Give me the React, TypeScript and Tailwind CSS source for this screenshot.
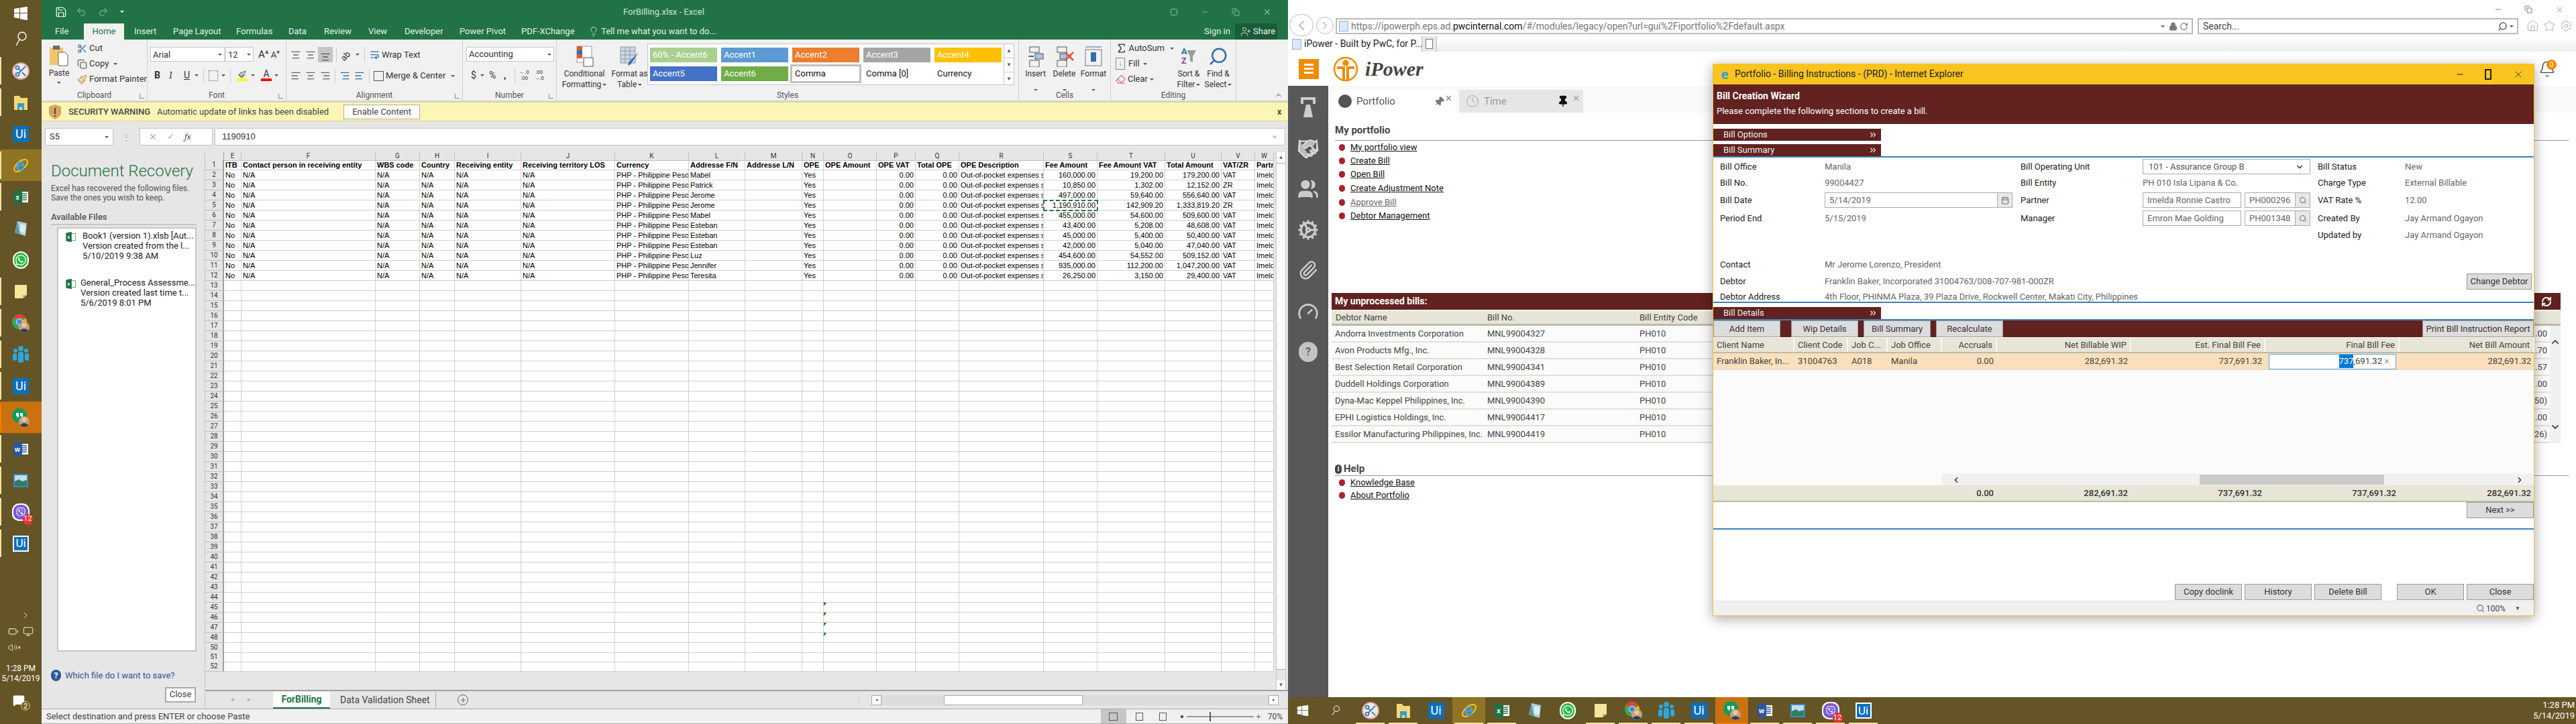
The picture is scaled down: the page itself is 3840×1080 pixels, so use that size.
import React from "react";
import {
  Save, Undo2, Redo2, ChevronDown, ChevronUp, Lightbulb, UserPlus, Scissors, Copy, Paintbrush, AlignLeft, AlignCenter, AlignRight,
  WrapText, Sigma, Search, Eraser, Lock, RotateCw, Home, Star, Settings, Pin, Clock, Calendar, ChevronLeft, ChevronRight,
  ChevronsRight, Bell, RefreshCw, Paperclip, Gauge, Cog, Handshake, Users, Minus, Square, X, Plus, MessageSquare, Volume2, Monitor, Battery,
} from "lucide-react";
import { FaWhatsapp, FaViber } from "react-icons/fa";

const seg = "font-[Roboto,sans-serif]";

function Mark({ on, orange }: { on?: boolean; orange?: boolean }) {
  if (!on) return <span className="w-[2px]" />;
  return <span className={orange ? "w-[2px] self-stretch bg-[#f57c00]" : "w-[2px] self-stretch bg-[#f6e3a1]"} />;
}

function AppIcon({ kind }: { kind: string }) {
  if (kind === "ui" || kind === "uiOutline") {
    return (
      <div className={kind === "ui" ? "flex h-[24px] w-[24px] items-center justify-center bg-[#0b6fbd] font-[Roboto,sans-serif] text-[18px] leading-none text-white" : "flex h-[24px] w-[24px] items-center justify-center border-2 border-white bg-[#0b6fbd] font-[Roboto,sans-serif] text-[17px] leading-none text-white"}>
        Ui
      </div>
    );
  }
  if (kind === "ie") {
    return (
      <svg width="26" height="26" viewBox="0 0 26 26">
        <ellipse cx="13" cy="13" rx="12" ry="6" fill="none" stroke="#f5c518" strokeWidth="2" transform="rotate(-40 13 13)" />
        <text x="13" y="21" textAnchor="middle" fontSize="26" fontFamily="Liberation Sans" fontWeight="700" fill="#3aa5e8">e</text>
      </svg>
    );
  }
  if (kind === "excel" || kind === "word") {
    const c = kind === "excel" ? "#1e7145" : "#2b579a";
    return (
      <svg width="24" height="26" viewBox="0 0 24 26">
        <rect x="10" y="5" width="13" height="16" fill="#fff" />
        <path d="M12 8h9M12 11h9M12 14h9M12 17h9" stroke={c} strokeWidth="1.4" />
        <path d="M1 4l13-3v24L1 22z" fill={c} />
        <text x="7" y="17" textAnchor="middle" fontSize="10" fontFamily="Liberation Sans" fontWeight="700" fill="#fff">{kind === "excel" ? "x" : "w"}</text>
      </svg>
    );
  }
  if (kind === "glass") return (
    <svg width="24" height="26" viewBox="0 0 24 26"><path d="M7 2l14 3-2 19-16-5z" fill="#a9d3dc" /><path d="M3 19l4-17 4 19z" fill="#5e9aa6" /><path d="M12 6l7 2-1 12-8-3z" fill="#dceff2" /></svg>
  );
  if (kind === "whatsapp") return (
    <div className="flex h-[26px] w-[24px] items-center justify-center rounded-full border-2 border-white bg-[#2bb741]"><FaWhatsapp className="text-white" size={18} /></div>
  );
  if (kind === "note") return (
    <svg width="22" height="24" viewBox="0 0 22 24"><path d="M2 2h18v15l-6 5H2z" fill="#f4e69b" /><path d="M14 22v-5h6z" fill="#c9b96a" /></svg>
  );
  if (kind === "chrome" || kind === "hangouts") return (
    <svg width="28" height="30" viewBox="0 0 28 30">
      {kind === "chrome" ? (
        <>
          <circle cx="12" cy="13" r="11" fill="#3aa757" />
          <path d="M2 8a11 11 0 0 1 20 0H12z" fill="#db4437" />
          <path d="M22 8a11 11 0 0 1-4 14l-6-9z" fill="#f4b400" />
          <circle cx="12" cy="13" r="4.5" fill="#4285f4" stroke="#fff" />
        </>
      ) : (
        <>
          <circle cx="12" cy="12" r="11" fill="#0f9d58" />
          <path d="M7 8h4v5l-2 3v-3H7zM13 8h4v5l-2 3v-3h-2z" fill="#fff" />
        </>
      )}
      <circle cx="19" cy="21" r="8" fill="#c89f7a" />
      <circle cx="19" cy="18" r="3.5" fill="#e8c6a5" />
      <path d="M13 27c1-5 11-5 12 0l-6 2z" fill="#2c3e66" />
    </svg>
  );
  if (kind === "people") return (
    <svg width="26" height="28" viewBox="0 0 26 28" fill="#29a9e0">
      <circle cx="13" cy="5" r="4" /><rect x="9" y="10" width="8" height="16" rx="3" />
      <circle cx="5" cy="8" r="3" /><rect x="1" y="12" width="6" height="11" rx="3" />
      <circle cx="21" cy="8" r="3" /><rect x="19" y="12" width="6" height="11" rx="3" />
    </svg>
  );
  if (kind === "picture") return (
    <svg width="24" height="24" viewBox="0 0 24 24"><rect x="1" y="2" width="22" height="20" fill="#3f87c5" /><rect x="3" y="4" width="18" height="16" fill="#bfe0ea" /><path d="M3 13l6-3 5 3 7-2v9H3z" fill="#2f7f5f" /></svg>
  );
  if (kind === "viber") return (
    <div className="relative flex h-[26px] w-[26px] items-center justify-center rounded-[10px] bg-white">
      <div className="flex h-[22px] w-[22px] items-center justify-center rounded-[9px] bg-[#7b5bd0]"><FaViber className="text-white" size={14} /></div>
      <span className="absolute -right-[5px] bottom-[-6px] flex h-[16px] w-[15px] items-center justify-center rounded-full bg-[#ee2f2f] font-[Roboto,sans-serif] text-[11px] text-white">12</span>
    </div>
  );
  if (kind === "snip") return (
    <div className="relative flex h-[26px] w-[26px] items-center justify-center rounded-full border-2 border-[#d8a0a0] bg-[#f3e7e4]"><Scissors size={20} className="text-[#1a78c2]" /></div>
  );
  if (kind === "folder") return (
    <svg width="24" height="26" viewBox="0 0 24 26"><path d="M2 3h8l2 3h10v18H2z" fill="#f7d774" /><path d="M7 14h10v10h-3v-4h-4v4H7z" fill="#2f9fd8" /></svg>
  );
  return null;
}

const leftIcons: [string, boolean, boolean?][] = [
  ["snip", true], ["folder", true], ["ui", false], ["ie", true], ["excel", true], ["glass", false], ["whatsapp", false], ["note", true],
  ["chrome", true], ["people", true], ["ui", true], ["hangouts", true, true], ["word", true], ["picture", true], ["viber", true], ["uiOutline", true],
];

function LeftTaskbar() {
  return (
    <div className="flex h-[1080px] w-[62px] shrink-0 flex-col bg-[#655425] text-white">
      <div className="flex h-[38px] items-center justify-center pt-[2px]">
        <svg width="22" height="22" viewBox="0 0 22 22" fill="#fff"><path d="M1 4l8-1.3V10H1zM10 2.5L21 1v9H10zM1 11h8v7.5L1 17.2zM10 11h11v10l-11-1.5z" /></svg>
      </div>
      <div className="flex h-[40px] items-center justify-center">
        <svg width="20" height="24" viewBox="0 0 20 24" fill="none" stroke="#fff" strokeWidth="1.4"><circle cx="12" cy="8" r="6" /><path d="M8 13L3 22" /></svg>
      </div>
      <div className="mt-[4px] flex flex-col">
        {leftIcons.map(([k, mark, orange], i) => (
          <div key={i} className={k === "ie" ? "flex h-[47px] items-stretch bg-[#8f7426]" : orange ? "flex h-[47px] items-stretch bg-[#c9720f]" : "flex h-[47px] items-stretch"}>
            <div className="flex py-[3px]"><Mark on={mark} orange={orange} /></div>
            <div className="flex flex-1 items-center justify-center pr-[2px]"><AppIcon kind={k} /></div>
          </div>
        ))}
      </div>
      <div className="mt-[76px] flex flex-col items-center">
        <ChevronRight size={16} className="ml-[14px]" strokeWidth={1.2} />
        <div className="mt-[8px] flex items-center gap-[6px]"><Battery size={16} strokeWidth={1.5} /><Monitor size={16} strokeWidth={1.3} /></div>
        <div className="mt-[9px] flex w-full items-center pl-[12px]"><Volume2 size={14} strokeWidth={1.3} /><span className="text-[9px]">×</span></div>
        <div className={`${seg} mt-[17px] text-[12px] leading-[15px]`}>1:28 PM</div>
        <div className={`${seg} text-[12px] leading-[15px]`}>5/14/2019</div>
        <div className="relative mt-[16px] h-[22px] w-[24px]">
          <MessageSquare size={18} className="fill-white" />
          <span className={`${seg} absolute bottom-[-2px] right-[-2px] flex h-[14px] w-[14px] items-center justify-center rounded-full border border-[#d8c27a] bg-[#7b5f20] text-[10px]`}>2</span>
        </div>
      </div>
    </div>
  );
}

function Caret({ className }: { className?: string }) {
  return <span className={`inline-block h-0 w-0 border-x-[3px] border-t-[3px] border-x-transparent border-t-[#555] ${className ?? ""}`} />;
}

function RibbonGroup({ w, label, center, children }: { w: string; label: string; center?: boolean; children: React.ReactNode }) {
  return (
    <div className={`${w} flex h-full shrink-0 flex-col border-r border-[#d0d0d0]`}>
      <div className="h-[77px] overflow-hidden">{children}</div>
      <div className="relative h-[15px] text-center text-[12px] leading-[14px] text-[#555]">
        {label}
        {!center && <span className="absolute bottom-[3px] right-[4px] h-[7px] w-[7px] border-b border-l border-[#888]" />}
      </div>
    </div>
  );
}

function TwoLine({ w, a, b, icon }: { w: string; a: string; b?: string; icon: React.ReactNode }) {
  return (
    <div className={`${w} flex shrink-0 flex-col items-center pt-[8px] text-[12px] leading-[16px] whitespace-nowrap text-[#333]`}>
      <div className="flex h-[33px] items-center justify-center">{icon}</div>
      <div className="mt-[2px]">{a}</div>
      {b ? <div className="flex items-center gap-[2px]">{b}<Caret /></div> : <div className="pt-[6px]"><Caret /></div>}
    </div>
  );
}

function Swatch({ t, c, dark, sel }: { t: string; c: string; dark?: boolean; sel?: boolean }) {
  return (
    <div className={`${c} flex h-[22px] w-[100px] items-center overflow-hidden whitespace-nowrap px-[4px] text-[13px] ${dark ? "text-[#111]" : "text-white"} ${sel ? "outline-[3px] outline-[#c0c0c0]" : ""}`}>{t}</div>
  );
}

function Ribbon() {
  return (
    <div className={`${seg} flex h-[93px] items-stretch border-b-2 border-[#d4d4d4] bg-[#f1f1f1] text-[13px] text-[#333]`}>
      <RibbonGroup w="w-[158px]" label="Clipboard">
        <div className="flex h-full">
          <div className="flex w-[51px] flex-col items-center pt-[8px] pl-[2px]">
            <svg width="30" height="32" viewBox="0 0 30 32"><rect x="1" y="4" width="20" height="26" fill="#f2c56b" /><rect x="6" y="1" width="10" height="6" fill="#6b6b6b" /><path d="M14 11h10l4 4v16H14z" fill="#fff" stroke="#666" /></svg>
            <div className="mt-[3px] text-[12px] leading-[14px]">Paste</div>
            <Caret className="mt-[6px]" />
          </div>
          <div className="flex flex-col gap-[5px] pt-[4px] pl-[3px] text-[13px] leading-[18px] whitespace-nowrap">
            <div className="flex items-center gap-[3px]"><Scissors size={15} className="text-[#2f6fb0]" />Cut</div>
            <div className="flex items-center gap-[3px]"><Copy size={15} className="text-[#666]" />Copy<Caret className="ml-[4px]" /></div>
            <div className="flex items-center gap-[3px]"><Paintbrush size={15} className="text-[#d79a3c]" />Format Painter</div>
          </div>
        </div>
      </RibbonGroup>
      <RibbonGroup w="w-[207px]" label="Font">
        <div className="flex items-center gap-[1px] pt-[11px] pl-[4px]">
          <div className="flex h-[22px] w-[111px] items-center justify-between border border-[#c6c6c6] bg-white px-[3px]">Arial<Caret /></div>
          <div className="flex h-[22px] w-[42px] items-center justify-between border border-[#c6c6c6] bg-white px-[3px]">12<Caret /></div>
          <span className="ml-[6px] text-[15px]">A<sup className="text-[#2f6fb0]">▴</sup></span>
          <span className="ml-[2px] text-[13px]">A<sup className="text-[#2f6fb0]">▾</sup></span>
        </div>
        <div className="flex items-center pt-[9px] pl-[10px] text-[14px]">
          <b className="w-[22px]">B</b><i className="w-[22px] font-serif">I</i><u className="w-[14px]">U</u><Caret className="ml-[2px]" />
          <span className="mx-[7px] h-[22px] border-l border-[#ccc]" />
          <span className="h-[16px] w-[14px] border border-dotted border-[#666]" /><Caret className="ml-[5px]" />
          <span className="mx-[7px] h-[22px] border-l border-[#ccc]" />
          <div className="flex w-[20px] flex-col items-center"><Paintbrush size={12} /><span className="h-[4px] w-[16px] bg-[#ffff00]" /></div><Caret className="ml-[3px]" />
          <div className="ml-[8px] flex w-[18px] flex-col items-center leading-[13px]">A<span className="h-[4px] w-[16px] bg-[#ff0000]" /></div><Caret className="ml-[3px]" />
        </div>
      </RibbonGroup>
      <RibbonGroup w="w-[263px]" label="Alignment">
        <div className="flex items-center pt-[11px] pl-[6px]">
          <AlignCenter size={16} className="mr-[6px] text-[#666]" /><AlignCenter size={16} className="mr-[3px] text-[#666]" />
          <span className="flex h-[23px] w-[22px] items-end justify-center bg-[#c6c6c6]"><AlignCenter size={16} className="text-[#555]" /></span>
          <span className="mx-[5px] h-[22px] border-l border-[#ccc]" />
          <span className="w-[20px] text-[13px] -rotate-45">ab</span><Caret className="ml-[3px]" />
          <span className="mx-[7px] h-[22px] border-l border-[#ccc]" />
          <WrapText size={15} className="mr-[3px] text-[#2f6fb0]" /><span className="whitespace-nowrap">Wrap Text</span>
        </div>
        <div className="flex items-center pt-[9px] pl-[6px]">
          <AlignLeft size={16} className="mr-[6px] text-[#666]" /><AlignCenter size={16} className="mr-[6px] text-[#666]" /><AlignRight size={16} className="text-[#666]" />
          <span className="mx-[6px] h-[22px] border-l border-[#ccc]" />
          <AlignRight size={16} className="mr-[6px] text-[#2f6fb0]" /><AlignLeft size={16} className="text-[#2f6fb0]" />
          <span className="mx-[6px] h-[22px] border-l border-[#ccc]" />
          <span className="mr-[3px] h-[15px] w-[15px] border border-[#555]" /><span className="whitespace-nowrap">Merge &amp; Center</span><Caret className="ml-[8px]" />
        </div>
      </RibbonGroup>
      <RibbonGroup w="w-[140px]" label="Number">
        <div className="pt-[11px] pl-[5px]"><div className="flex h-[22px] w-[131px] items-center justify-between border border-[#c6c6c6] bg-white px-[3px]">Accounting<Caret /></div></div>
        <div className="flex h-[31px] items-center pt-[9px] pl-[12px] text-[14px]">
          <span className="w-[12px]">$</span><Caret className="ml-[2px]" /><span className="ml-[7px] w-[20px]">%</span><b className="ml-[2px] w-[16px]">,</b>
          <span className="h-[22px] border-l border-[#ccc]" />
          <span className="ml-[4px] w-[19px] text-center text-[8px] leading-[9px]">←.0<br />.00</span><span className="ml-[3px] w-[19px] text-center text-[8px] leading-[9px]">.00<br />→.0</span>
        </div>
      </RibbonGroup>
      <RibbonGroup w="w-[689px]" label="Styles" center>
        <div className="flex">
          <TwoLine w="w-[82px]" a="Conditional" b="Formatting" icon={<svg width="30" height="32" viewBox="0 0 30 32"><rect x="4" y="1" width="22" height="24" fill="#fff" stroke="#999" /><rect x="4" y="7" width="8" height="6" fill="#2f6fb0" /><rect x="4" y="1" width="8" height="6" fill="#d9573a" /><rect x="4" y="13" width="8" height="6" fill="#d9573a" /><rect x="14" y="18" width="14" height="13" fill="#fff" stroke="#555" /></svg>} />
          <TwoLine w="w-[53px]" a="Format as" b="Table" icon={<svg width="30" height="32" viewBox="0 0 30 32"><rect x="1" y="2" width="22" height="24" fill="#c9d8ec" stroke="#999" /><path d="M1 8h22M1 14h22M1 20h22M8 2v24M15 2v24" stroke="#999" /><path d="M28 10L16 28l-4 2 1-5z" fill="#2f6fb0" /></svg>} />
          <div className="mt-[6px] flex h-[62px] w-[547px] border border-[#c6c6c6] bg-white">
            <div className="grid w-[530px] grid-cols-[100px_100px_100px_100px_100px] content-center gap-x-[6px] gap-y-[6px] pl-[3px]">
              <Swatch t="60% - Accent6" c="bg-[#a9d08e]" /><Swatch t="Accent1" c="bg-[#5b9bd5]" /><Swatch t="Accent2" c="bg-[#ed7d31]" /><Swatch t="Accent3" c="bg-[#a5a5a5]" /><Swatch t="Accent4" c="bg-[#ffc000]" />
              <Swatch t="Accent5" c="bg-[#4472c4]" /><Swatch t="Accent6" c="bg-[#70ad47]" /><Swatch t="Comma" c="bg-white" dark sel /><Swatch t="Comma [0]" c="bg-white" dark /><Swatch t="Currency" c="bg-white" dark />
            </div>
            <div className="flex w-[15px] flex-col border-l border-[#c6c6c6] text-center text-[8px] leading-[20px] text-[#555]"><span>▲</span><span className="border-y border-[#c6c6c6]">▼</span><span>▼</span></div>
          </div>
        </div>
      </RibbonGroup>
      <RibbonGroup w="w-[137px]" label="Cells" center>
        <div className="flex pl-[3px]">
          <TwoLine w="w-[43px]" a="Insert" icon={<svg width="26" height="32" viewBox="0 0 26 32" fill="none" stroke="#555"><rect x="4" y="2" width="14" height="8" /><rect x="12" y="12" width="12" height="8" fill="#a9c7e6" /><rect x="4" y="22" width="14" height="10" /><path d="M2 16h8" stroke="#2f6fb0" strokeWidth="2" /></svg>} />
          <TwoLine w="w-[43px]" a="Delete" icon={<svg width="30" height="32" viewBox="0 0 30 32" fill="none" stroke="#555"><rect x="4" y="2" width="14" height="8" /><rect x="8" y="12" width="10" height="8" fill="#a9c7e6" /><rect x="4" y="22" width="14" height="10" /><path d="M16 10l12 12M28 10L16 22" stroke="#d9573a" strokeWidth="2.5" /></svg>} />
          <TwoLine w="w-[44px]" a="Format" icon={<svg width="28" height="32" viewBox="0 0 28 32" fill="none" stroke="#777"><path d="M2 2h24" stroke="#2f6fb0" /><rect x="2" y="6" width="24" height="24" /><rect x="10" y="10" width="8" height="14" fill="#2f6fb0" stroke="none" /></svg>} />
        </div>
      </RibbonGroup>
      <RibbonGroup w="w-[187px]" label="Editing" center>
        <div className="flex">
          <div className="flex w-[94px] shrink-0 flex-col gap-[5px] pt-[4px] pl-[7px] text-[13px] leading-[18px] whitespace-nowrap">
            <div className="flex items-center gap-[2px]"><Sigma size={18} />AutoSum<Caret className="ml-[6px]" /></div>
            <div className="flex items-center gap-[5px]"><span className="flex h-[18px] w-[14px] items-center justify-center border border-[#888] text-[10px] text-[#2f6fb0]">↓</span>Fill<Caret /></div>
            <div className="flex items-center gap-[3px]"><Eraser size={15} className="text-[#d9708a]" />Clear<Caret /></div>
          </div>
          <TwoLine w="w-[44px]" a="Sort &" b="Filter" icon={<span className="flex items-center"><span className="flex flex-col text-[13px] leading-[14px] font-bold"><span className="text-[#2f6fb0]">A</span><span className="text-[#7b4fa3]">Z</span></span><svg width="14" height="22" viewBox="0 0 14 22"><path d="M0 2h14L9 11v9l-4-2v-7z" fill="#999" /></svg></span>} />
          <TwoLine w="w-[44px]" a="Find &" b="Select" icon={<Search size={30} className="-scale-x-100 text-[#2f6fb0]" />} />
        </div>
      </RibbonGroup>
      <div className="flex flex-1 items-end justify-end pr-[8px] pb-[2px]"><ChevronUp size={12} /></div>
    </div>
  );
}

const gridRows = (() => {
  const names = ["Mabel", "Patrick", "Jerome", "Jerome", "Mabel", "Esteban", "Esteban", "Esteban", "Luz", "Jennifer", "Teresita"];
  const fees = [
    ["160,000.00", "19,200.00", "179,200.00", "VAT"], ["10,850.00", "1,302.00", "12,152.00", "ZR"], ["497,000.00", "59,640.00", "556,640.00", "VAT"],
    ["1,190,910.00", "142,909.20", "1,333,819.20", "ZR"], ["455,000.00", "54,600.00", "509,600.00", "VAT"], ["43,400.00", "5,208.00", "48,608.00", "VAT"],
    ["45,000.00", "5,400.00", "50,400.00", "VAT"], ["42,000.00", "5,040.00", "47,040.00", "VAT"], ["454,600.00", "54,552.00", "509,152.00", "VAT"],
    ["935,000.00", "112,200.00", "1,047,200.00", "VAT"], ["26,250.00", "3,150.00", "29,400.00", "VAT"],
  ];
  return names.map((n, i) => ["No", "N/A", "N/A", "N/A", "N/A", "N/A", "PHP - Philippine Peso", n, "", "Yes", "", "0.00", "0.00", "Out-of-pocket expenses s", ...fees[i], "Imeld"]);
})();

const colLetters = ["E", "F", "G", "H", "I", "J", "K", "L", "M", "N", "O", "P", "Q", "R", "S", "T", "U", "V", "W"];
const headers = ["ITB", "Contact person in receiving entity", "WBS code", "Country", "Receiving entity", "Receiving territory LOS", "Currency", "Addresse F/N", "Addresse L/N", "OPE", "OPE Amount", "OPE VAT", "Total OPE", "OPE Description", "Fee Amount", "Fee Amount VAT", "Total Amount", "VAT/ZR", "Partn"];
const rightCols = new Set([11, 12, 14, 15, 16]);
const sheetCols = "grid grid-cols-[28px_26px_200px_66px_52px_99px_140px_110px_84px_85px_32px_79px_58px_65px_126px_80px_101px_84px_50px_28px]";
const rowNums = Array.from({ length: 52 }, (_, i) => i + 1).filter((n) => n !== 49);

function Sheet() {
  return (
    <div className="flex min-w-0 flex-1 flex-col">
      <div className="flex">
        <div className="w-[1593px] font-['Liberation_Sans',sans-serif] text-[11px] leading-[14px] text-black">
          <div className={`${sheetCols} h-[12px] bg-[#e6e6e6]`}>
            <div className="border-r border-b border-[#9f9f9f]" />
            {colLetters.map((c) => <div key={c} className={`${seg} border-r border-b border-[#c0c0c0] text-center text-[10px] leading-[12px] text-[#333]`}>{c}</div>)}
          </div>
          {rowNums.map((n) => {
            const vals = n === 1 ? headers : n <= 12 ? gridRows[n - 2] : null;
            return (
              <div key={n} className={`${sheetCols} ${n >= 50 ? "h-[14px]" : "h-[15px]"} bg-white`}>
                <div className={`${seg} border-r-2 border-b border-r-[#9f9f9f] border-b-[#c0c0c0] bg-[#e6e6e6] text-center text-[10px] leading-[14px] text-[#333]`}>{n}</div>
                {colLetters.map((_, i) => {
                  const selected = n === 5 && i === 14;
                  const mark = i === 10 && n >= 45 && n <= 48;
                  return (
                    <div key={i} className={`relative overflow-hidden border-r border-b border-[#d0d0d0] px-[2px] whitespace-nowrap ${n === 1 ? "font-bold" : ""} ${n > 1 && rightCols.has(i) ? "text-right" : ""} ${selected ? "outline-2 -outline-offset-1 outline-[#1e7145] outline-dashed" : ""}`}>
                      {mark && <span className="absolute top-0 left-0 h-[5px] w-[4px] bg-[#0a7a0a] [clip-path:polygon(0_0,100%_0,0_100%)]" />}
                      {vals ? vals[i] : ""}
                    </div>
                  );
                })}
              </div>
            );
          })}
        </div>
        <div className="ml-[3px] flex h-[802px] w-[15px] flex-col border-x border-[#c6c6c6] bg-[#e6e6e6]">
          <div className="flex h-[16px] items-center justify-center bg-white text-[8px] text-[#666]">▲</div>
          <div className="h-[756px] border-y border-[#aaa] bg-white" />
          <div className="flex-1" />
          <div className="flex h-[14px] items-center justify-center bg-white text-[8px] text-[#666]">▼</div>
        </div>
      </div>
      <div className="flex-1" />
      <div className={`${seg} flex h-[28px] items-center border-t-2 border-[#9f9f9f] bg-[#e6e6e6]`}>
        <div className="flex w-[101px] justify-center gap-[20px] pl-[5px] text-[9px] text-[#aaa]"><span>◂</span><span>▸</span></div>
        <div className="flex h-[25px] w-[85px] items-center justify-center border-b-[2px] border-[#217346] bg-white text-[14px] font-bold text-[#217346]">ForBilling</div>
        <div className="ml-[15px] flex h-[24px] w-[143px] items-center border-r border-[#aaa] text-[14px] text-[#444]">Data Validation Sheet</div>
        <div className="ml-[32px] flex h-[16px] w-[16px] items-center justify-center rounded-full border border-[#666] text-[#666]"><Plus size={11} /></div>
        <div className="ml-[577px] text-[10px] leading-[5px] text-[#999]">⋮</div>
        <div className="ml-[14px] flex h-[15px] w-[607px] items-center bg-[#dcdcdc]">
          <div className="flex h-full w-[15px] items-center justify-center border border-[#aaa] bg-white text-[7px] text-[#555]">◂</div>
          <div className="ml-[93px] h-full w-[207px] border border-[#aaa] bg-white" />
          <div className="flex-1" />
          <div className="flex h-full w-[15px] items-center justify-center border border-[#aaa] bg-white text-[7px] text-[#555]">▸</div>
        </div>
      </div>
    </div>
  );
}

function Excel() {
  const tabs = [["File", "w-[43px]", ""], ["Home", "w-[60px]", "h"], ["Insert", "w-[58px]", ""], ["Page Layout", "w-[94px]", ""], ["Formulas", "w-[78px]", ""], ["Data", "w-[53px]", ""], ["Review", "w-[66px]", ""], ["View", "w-[54px]", ""], ["Developer", "w-[82px]", ""], ["Power Pivot", "w-[92px]", ""], ["PDF-XChange", "w-[108px]", ""]];
  return (
    <div className={`${seg} flex h-[1080px] w-[1858px] shrink-0 flex-col bg-[#e6e6e6]`}>
      <div className="flex h-[35px] items-center bg-[#217346] text-white">
        <Save size={18} className="ml-[20px]" strokeWidth={1.6} />
        <Undo2 size={16} className="ml-[13px] text-[#6fa98a]" /><Redo2 size={16} className="ml-[17px] text-[#6fa98a]" />
        <Caret className="ml-[17px] !border-t-white" />
        <div className="ml-[744px] w-[108px] text-[13px] whitespace-nowrap text-[#cfe3d8]">ForBilling.xlsx - Excel</div>
        <Square size={12} className="ml-[707px] text-[#8db9a2]" />
        <Minus size={12} className="ml-[34px] text-[#8db9a2]" />
        <Copy size={12} className="ml-[34px] text-[#8db9a2]" />
        <X size={14} className="ml-[34px] text-[#8db9a2]" />
      </div>
      <div className="flex h-[24px] items-stretch bg-[#217346] pr-[16px] text-[13px] leading-[24px] text-[#e4efe9]">
        <div className="flex pl-[20px]">
          {tabs.map(([t, w, h]) => (
            <div key={t} className={`${w} ${h ? "bg-[#f1f1f1] text-center text-[#217346]" : t === "File" ? "" : "pl-[15px]"} whitespace-nowrap`}>{t}</div>
          ))}
        </div>
        <Lightbulb size={16} className="mt-[4px] ml-[7px]" strokeWidth={1.2} />
        <span className="ml-[3px] whitespace-nowrap">Tell me what you want to do...</span>
        <span className="ml-auto w-[46px]">Sign in</span>
        <div className="flex w-[63px] items-center gap-[3px] bg-[#1a5c38] pl-[8px]"><UserPlus size={16} strokeWidth={1.3} />Share</div>
      </div>
      <Ribbon />
      <div className="flex h-[29px] items-center border-y border-[#dcd68a] bg-[#fcf6b5] text-[13px] text-[#444]">
        <svg width="20" height="24" viewBox="0 0 20 24" className="ml-[10px]"><path d="M10 1l9 3v9c0 5-5 8-9 10-4-2-9-5-9-10V4z" fill="#d9a55a" /><rect x="9" y="6" width="2" height="9" fill="#444" /><rect x="9" y="17" width="2" height="2" fill="#444" /></svg>
        <span className="ml-[10px] font-medium whitespace-nowrap">SECURITY WARNING</span>
        <span className="ml-[10px] whitespace-nowrap">Automatic update of links has been disabled</span>
        <div className="ml-[22px] flex h-[22px] w-[114px] items-center justify-center border border-[#aaa] bg-white text-[13px]">Enable Content</div>
        <div className="ml-auto mr-[10px] text-[12px] font-bold">x</div>
      </div>
      <div className="flex h-[46px] items-start bg-[#e6e6e6] pt-[10px] text-[13px] text-[#333]">
        <div className="ml-[5px] flex h-[26px] w-[102px] items-center justify-between border border-[#c6c6c6] bg-white px-[6px]">S5<Caret /></div>
        <span className="mt-[4px] ml-[13px] text-[#aaa]">⋮</span>
        <div className="ml-[13px] flex h-[26px] w-[109px] items-center border border-[#c6c6c6] bg-white pl-[12px] text-[#aaa]"><X size={14} /><span className="ml-[14px]">✓</span><i className="ml-[15px] font-serif text-[#555]">fx</i></div>
        <div className="ml-[3px] flex h-[26px] flex-1 items-center justify-between border border-[#c6c6c6] bg-white px-[10px] mr-[4px] font-['Liberation_Sans',sans-serif]">1190910<ChevronDown size={10} /></div>
      </div>
      <div className="flex min-h-0 flex-1">
        <div className="flex w-[244px] shrink-0 flex-col border-r border-[#c6c6c6] pl-[14px]">
          <div className="mt-[13px] text-[24px] leading-[30px] font-light whitespace-nowrap text-[#217346]">Document Recovery</div>
          <div className="mt-[5px] text-[12px] leading-[13.5px] whitespace-nowrap text-[#555]">Excel has recovered the following files.<br />Save the ones you wish to keep.</div>
          <div className="mt-[14px] border-b-2 border-[#c6c6c6] pb-[2px] text-[13px] leading-[16px] font-medium text-[#555] mr-[12px]">Available Files</div>
          <div className="ml-[9px] mr-[12px] mt-[3px] h-[633px] border-2 border-[#c6c6c6] bg-white pt-[3px] text-[13px] leading-[15px] text-[#222]">
            {[["Book1 (version 1).xlsb  [Aut...", "Version created from the l...", "5/10/2019 9:38 AM"], ["General_Process Assessme...", "Version created last time t...", "5/6/2019 8:01 PM"]].map((f) => (
              <div key={f[0]} className="mb-[25px] flex pl-[10px]">
                <div className="w-[26px] pt-[1px]"><svg width="17" height="17" viewBox="0 0 24 26"><rect x="10" y="5" width="13" height="16" fill="#fff" stroke="#1e7145" /><path d="M1 4l13-3v24L1 22z" fill="#1e7145" /><text x="7" y="17" textAnchor="middle" fontSize="11" fontFamily="Liberation Sans" fontWeight="700" fill="#fff">x</text></svg></div>
                <div className="whitespace-nowrap">{f.map((l) => <div key={l}>{l}</div>)}</div>
              </div>
            ))}
          </div>
          <div className="mt-[26px] flex items-center text-[13px] text-[#2b579a]">
            <span className="mr-[6px] flex h-[17px] w-[15px] items-center justify-center rounded-full bg-[#2b579a] text-[12px] font-bold text-white">?</span>Which file do I want to save?
          </div>
          <div className="mt-[7px] mr-[13px] flex justify-end"><div className="flex h-[23px] w-[46px] items-center justify-center border-2 border-[#aaa] bg-white text-[13px] text-[#444]">Close</div></div>
        </div>
        <Sheet />
      </div>
      <div className="flex h-[23px] shrink-0 items-center border-y border-[#aaa] bg-[#f0f0f0] pl-[7px] text-[13px] text-[#444]">
        <span className="whitespace-nowrap">Select destination and press ENTER or choose Paste</span>
        <div className="ml-auto flex h-full w-[38px] items-center justify-center bg-[#c6c6c6]"><span className="h-[12px] w-[13px] border border-[#555]" /></div>
        <span className="ml-[14px] h-[12px] w-[11px] border border-[#555]" />
        <span className="ml-[24px] h-[12px] w-[11px] border border-[#555]" />
        <span className="ml-[21px] h-[4px] w-[4px] bg-[#555]" />
        <div className="relative ml-[5px] h-[2px] w-[100px] bg-[#999]"><span className="absolute top-[-6px] left-[34px] h-[14px] w-[2px] bg-[#555]" /></div>
        <Plus size={10} className="ml-[2px]" />
        <span className="mr-[8px] ml-[9px] text-[12px]">70%</span>
      </div>
    </div>
  );
}

function Bullet() {
  return <span className="mr-[8px] inline-block h-[10px] w-[9px] rounded-full bg-[#a8232b]" />;
}

function LinkRow({ t, muted, h }: { t: string; muted?: boolean; h: string }) {
  return <div className={`${h} flex items-center pl-[6px] text-[13px]`}><Bullet /><span className={`underline ${muted ? "text-[#666]" : "text-[#111]"}`}>{t}</span></div>;
}

const bills = [
  ["Andorra Investments Corporation", "MNL99004327", ".00"], ["Avon Products Mfg., Inc.", "MNL99004328", ".70"], ["Best Selection Retail Corporation", "MNL99004341", ".57"],
  ["Duddell Holdings Corporation", "MNL99004389", ".00"], ["Dyna-Mac Keppel Philippines, Inc.", "MNL99004390", "50)"], ["EPHI Logistics Holdings, Inc.", "MNL99004417", ".00"], ["Essilor Manufacturing Philippines, Inc.", "MNL99004419", "26)"],
];

function Field({ children }: { children: React.ReactNode }) {
  return <span className="text-[#666]">{children}</span>;
}

function Input({ w, children }: { w: string; children: React.ReactNode }) {
  return <div className={`${w} flex h-[23px] items-center border border-[#aaa] bg-white px-[6px] text-[#666] whitespace-nowrap`}>{children}</div>;
}

function CodePicker({ name, code }: { name: string; code: string }) {
  return (
    <div className="flex gap-[5px]">
      <Input w="w-[147px]">{name}</Input>
      <div className="flex h-[23px] w-[98px] items-center border border-[#aaa] pl-[6px] text-[#666]">{code}<span className="ml-auto flex h-full w-[22px] items-center justify-center border-l border-[#aaa] bg-[#e8e8e8]"><Search size={12} /></span></div>
    </div>
  );
}

function Section({ t }: { t: string }) {
  return <div className="flex h-[18px] w-[250px] items-center justify-between bg-[#612220] pr-[5px] pl-[15px] text-[13px] text-[#eee]">{t}<ChevronsRight size={14} /></div>;
}

function GrayBtn({ w, children, h = "h-[24px]" }: { w: string; children: React.ReactNode; h?: string }) {
  return <div className={`${w} ${h} flex shrink-0 items-center justify-center border border-[#999] bg-[#dcdcdc] text-[#333]`}>{children}</div>;
}

const detailCols = "grid grid-cols-[121px_80px_59px_81px_82px_200px_200px_200px_201px]";

function Popup() {
  const heads = ["Client Name", "Client Code", "Job C...", "Job Office", "Accruals", "Net Billable WIP", "Est. Final Bill Fee", "Final Bill Fee", "Net Bill Amount"];
  return (
    <div className="absolute top-[95px] left-[633px] flex h-[824px] w-[1225px] flex-col border-x border-b border-[#f0c040] bg-white text-[13px] text-[#222] shadow-[0_4px_18px_rgba(0,0,0,0.35)]">
      <div className="flex h-[31px] items-center bg-[#f9c41f] pl-[9px] text-[14px] text-[#222]">
        <span className="relative flex h-[18px] w-[16px] items-center justify-center text-[20px] leading-none font-bold text-[#2f9fe0]">e</span>
        <span className="ml-[7px]">Portfolio - Billing Instructions - (PRD) - Internet Explorer</span>
        <Minus size={14} className="ml-auto" /><span className="ml-[30px] h-[16px] w-[10px] border-2 border-[#222]" /><X size={16} strokeWidth={1.2} className="mr-[15px] ml-[32px]" />
      </div>
      <div className="h-[59px] bg-[#612220] pt-[7px] pl-[5px] text-white">
        <div className="text-[14px] leading-[20px] font-bold">Bill Creation Wizard</div>
        <div className="mt-[3px] text-[13px] leading-[20px]">Please complete the following sections to create a bill.</div>
      </div>
      <div className="mt-[7px]"><Section t="Bill Options" /></div>
      <div className="mt-[5px]"><Section t="Bill Summary" /></div>
      <div className="h-[219px] border-y-2 border-[#3f81b9] pl-[10px]">
        <div className="grid h-[147px] grid-cols-[156px_292px_182px_261px_130px_1fr] grid-rows-[25px_24px_27px_27px_23px] items-center pt-[1px]">
          <span>Bill Office</span><Field>Manila</Field><span>Bill Operating Unit</span>
          <div className="flex h-[23px] w-[250px] items-center justify-between border border-[#aaa] px-[8px] text-[#555]">101 - Assurance Group B<ChevronDown size={14} className="text-[#222]" /></div>
          <span>Bill Status</span><Field>New</Field>
          <span>Bill No.</span><Field>99004427</Field><span>Bill Entity</span><Field>PH 010  Isla Lipana &amp; Co.</Field><span>Charge Type</span><Field>External Billable</Field>
          <span>Bill Date</span>
          <div className="flex h-[23px] w-[280px] items-center border border-[#aaa] pl-[6px] text-[#666]">5/14/2019<span className="ml-auto flex h-full w-[22px] items-center justify-center border-l border-[#aaa] bg-[#e8e8e8]"><Calendar size={12} /></span></div>
          <span>Partner</span><CodePicker name="Imelda Ronnie Castro" code="PH000296" /><span>VAT Rate %</span><Field>12.00</Field>
          <span>Period End</span><Field>5/15/2019</Field><span>Manager</span><CodePicker name="Emron Mae Golding" code="PH001348" /><span>Created By</span><Field>Jay Armand Ogayon</Field>
          <span /><span /><span /><span /><span>Updated by</span><Field>Jay Armand Ogayon</Field>
        </div>
        <div className="flex h-[25px] items-center"><span className="w-[156px]">Contact</span><Field>Mr Jerome Lorenzo, President</Field></div>
        <div className="flex h-[25px] items-center"><span className="w-[156px]">Debtor</span><Field>Franklin Baker, Incorporated  31004763/008-707-981-000ZR</Field><GrayBtn w="w-[97px] ml-auto mr-[3px]">Change Debtor</GrayBtn></div>
        <div className="flex h-[21px] items-center"><span className="w-[156px]">Debtor Address</span><Field>4th Floor, PHINMA Plaza, 39 Plaza Drive, Rockwell Center, Makati City,  Philippines</Field></div>
      </div>
      <div className="mt-[6px]"><Section t="Bill Details" /></div>
      <div className="flex h-[314px] flex-col border-y-2 border-[#3f81b9] pb-[15px]">
        <div className="flex h-[25px] bg-[#612220]">
          <GrayBtn w="w-[100px]" h="h-full">Add Item</GrayBtn><div className="w-[16px]" />
          <GrayBtn w="w-[100px]" h="h-full">Wip Details</GrayBtn><div className="w-[8px]" />
          <GrayBtn w="w-[100px]" h="h-full">Bill Summary</GrayBtn><div className="w-[8px]" />
          <GrayBtn w="w-[100px]" h="h-full">Recalculate</GrayBtn>
          <GrayBtn w="w-[166px] ml-auto" h="h-full">Print Bill Instruction Report</GrayBtn>
        </div>
        <div className={`${detailCols} mt-[1px] h-[23px] border-b-2 border-[#bdbaa8] bg-[#e7e5d6] text-[#444]`}>
          {heads.map((h, i) => <div key={h} className={`flex items-center border-r-2 border-white/70 px-[5px] ${i > 3 ? "justify-end" : ""}`}>{h}</div>)}
        </div>
        <div className={`${detailCols} h-[25px] border-b border-[#e0dccb] bg-[#fae0bc] text-[#444]`}>
          <div className="flex items-center pl-[5px]">Franklin Baker, In...</div><div className="flex items-center pl-[5px]">31004763</div><div className="flex items-center pl-[5px]">A018</div><div className="flex items-center pl-[5px]">Manila</div>
          <div className="flex items-center justify-end pr-[5px]">0.00</div><div className="flex items-center justify-end pr-[5px]">282,691.32</div><div className="flex items-center justify-end pr-[5px]">737,691.32</div>
          <div className="flex items-center pl-[5px]"><div className="flex h-[23px] w-[190px] items-center justify-end border border-[#5aa7e8] bg-white pr-[8px]"><span className="bg-[#0078d7] text-white">737</span>,691.32<X size={10} className="ml-[2px]" /></div></div>
          <div className="flex items-center justify-end pr-[5px]">282,691.32</div>
        </div>
        <div className="flex flex-1 items-end bg-[#fbfbfb]">
          <div className="ml-[341px] flex h-[17px] flex-1 items-center bg-[#f0f0f0] px-[14px]">
            <ChevronLeft size={14} /><div className="ml-[356px] h-[15px] w-[275px] bg-[#cacaca]" /><ChevronRight size={14} className="ml-auto" />
          </div>
        </div>
        <div className={`${detailCols} h-[25px] border-b-2 border-[#bdbaa8] bg-[#e7e5d6] font-medium text-[#333]`}>
          <div /><div /><div /><div />
          {["0.00", "282,691.32", "737,691.32", "737,691.32", "282,691.32"].map((v, i) => <div key={i} className="flex items-center justify-end pr-[5px]">{v}</div>)}
        </div>
        <div className="flex justify-end"><GrayBtn w="w-[100px]">Next &gt;&gt;</GrayBtn></div>
      </div>
      <div className="flex-1" />
      <div className="flex justify-end gap-[4px]">
        <GrayBtn w="w-[100px]">Copy doclink</GrayBtn><GrayBtn w="w-[100px]">History</GrayBtn><GrayBtn w="w-[100px]">Delete Bill</GrayBtn>
        <GrayBtn w="w-[100px] ml-[19px]">OK</GrayBtn><GrayBtn w="w-[100px]">Close</GrayBtn>
      </div>
      <div className="mt-[1px] flex h-[22px] items-center justify-end border-t border-[#ddd] bg-[#f0f0f0] pr-[20px] text-[12px] text-[#444]">
        <Search size={13} className="mr-[2px] text-[#2f6fb0]" />100%<span className="ml-[14px] text-[8px]">▼</span>
      </div>
    </div>
  );
}

function Browser() {
  const side: React.ReactNode[] = [
    <svg key="r" width="26" height="32" viewBox="0 0 26 32" fill="#ccc"><path d="M2 1h22v10h-4V5H6v6H2zM10 12h6l4 19H6z" /></svg>,
    <Handshake key="h" size={34} strokeWidth={1.5} className="fill-[#bbb] text-[#ddd]" />,
    <Users key="u" size={32} strokeWidth={2} className="fill-[#ccc] text-[#ccc]" />,
    <Cog key="c" size={32} strokeWidth={2.4} className="text-[#ccc]" />,
    <Paperclip key="p" size={30} strokeWidth={2} className="text-[#ccc]" />,
    <Gauge key="g" size={32} strokeWidth={2} className="text-[#ccc]" />,
    <div key="q" className={`${seg} flex h-[30px] w-[28px] items-center justify-center rounded-full bg-[#c4c4c4] text-[16px] font-bold text-[#666]`}>?</div>,
  ];
  const barIcons = ["snip", "folder", "ui", "ie", "excel", "glass", "whatsapp", "note", "chrome", "people", "ui", "hangouts", "word", "picture", "viber", "uiOutline"];
  return (
    <div className={`${seg} relative flex h-[1080px] w-[1920px] shrink-0 flex-col bg-white text-[13px] text-[#222]`}>
      <div className="flex h-[21px] items-center justify-end gap-[33px] pt-[7px] pr-[17px] text-[#777]"><Minus size={12} /><Copy size={12} /><X size={15} strokeWidth={1.2} /></div>
      <div className="flex h-[33px]">
        <div className="ml-[2px] flex h-[33px] w-[36px] items-center justify-center rounded-full border border-[#bbb] text-[#bbb]"><ChevronLeft size={24} /></div>
        <div className="mt-[4px] ml-[4px] flex h-[26px] w-[26px] items-center justify-center rounded-full border border-[#bbb] text-[#bbb]"><ChevronRight size={18} /></div>
        <div className="mt-[6px] ml-[3px] flex h-[24px] w-[1278px] items-center border-2 border-[#bbb] pr-[5px] pl-[3px] text-[14px] text-[#777]">
          <span className="mr-[4px] h-[16px] w-[14px] border border-[#8db3d9] bg-[#dbe9f6]" />
          https://ipowerph.eps.ad.<span className="text-[#111]">pwcinternal.com</span>/#/modules/legacy/open?url=gui%2Fiportfolio%2Fdefault.aspx
          <Caret className="ml-auto" /><Lock size={13} className="ml-[6px] fill-[#777]" /><RotateCw size={13} className="ml-[3px]" />
        </div>
        <div className="mt-[6px] ml-[7px] flex h-[24px] w-[478px] items-center justify-between border-2 border-[#bbb] pr-[5px] pl-[6px] text-[14px] text-[#444]">Search...<span className="flex items-center gap-[3px]"><Search size={15} className="-scale-x-100" /><Caret /></span></div>
        <div className="mt-[8px] ml-[12px] flex gap-[6px] text-[#aaa]"><Home size={19} strokeWidth={1.2} /><Star size={19} strokeWidth={1.2} /><Settings size={19} strokeWidth={1.2} /></div>
      </div>
      <div className="flex h-[23px] bg-gradient-to-b from-white to-[#eeeeee]">
        <div className="flex w-[200px] items-center border-r border-[#bbb] bg-white pr-[4px] pl-[6px] text-[14px] whitespace-nowrap"><span className="mr-[4px] h-[16px] w-[14px] shrink-0 border border-[#8db3d9] bg-[#dbe9f6]" />iPower - Built by PwC, for P...<X size={12} className="ml-auto text-[#888]" /></div>
        <div className="flex w-[22px] items-center justify-center border-r border-[#bbb] bg-[#e8e8e8]"><span className="h-[15px] w-[11px] border border-[#777] bg-white" /></div>
      </div>
      <div className="flex h-[51px] items-center">
        <div className="ml-[16px] flex h-[30px] w-[30px] flex-col items-center justify-center gap-[3px] bg-[#f08c00]"><span className="h-[3px] w-[14px] bg-white" /><span className="h-[3px] w-[14px] bg-white" /><span className="h-[3px] w-[14px] bg-white" /></div>
        <svg width="38" height="38" viewBox="0 0 38 38" className="ml-[21px]" fill="none" stroke="#f08c00" strokeWidth="2.5"><ellipse cx="19" cy="19" rx="17" ry="17" /><circle cx="19" cy="10" r="3.5" fill="#f08c00" /><path d="M6 17h10v20M32 17H22v20" strokeWidth="4" /></svg>
        <span className="ml-[10px] font-['Liberation_Serif',serif] text-[30px] leading-none font-bold text-[#444] italic">iPower</span>
        <div className="relative mr-[30px] ml-auto"><Bell size={26} strokeWidth={1.2} className="text-[#444]" /><span className="absolute -top-[1px] left-[12px] flex h-[15px] w-[15px] items-center justify-center rounded-full bg-[#f08c00] text-[10px] text-white">0</span></div>
      </div>
      <div className="flex min-h-0 flex-1">
        <div className="flex w-[60px] shrink-0 flex-col items-center bg-[#58585a] pt-[16px]">
          {side.map((s, i) => <div key={i} className="flex h-[61px] shrink-0 items-start justify-center">{s}</div>)}
        </div>
        <div className="flex min-w-0 flex-1 flex-col">
          <div className="flex h-[40px] items-end bg-[#f9f9f9] pl-[5px] text-[15px]">
            <div className="flex h-[34px] w-[185px] items-center bg-white pl-[10px] text-[#555]"><span className="mr-[7px] h-[20px] w-[20px] rounded-full bg-[#555]" />Portfolio<Pin size={15} className="ml-auto rotate-45 fill-[#777] text-[#777]" /><X size={13} className="mr-[4px] mb-[10px] text-[#777]" /></div>
            <div className="ml-[5px] flex h-[34px] w-[185px] items-center rounded-t-[2px] bg-[#e6e6e6] pl-[10px] text-[#999]"><Clock size={20} strokeWidth={1} className="mr-[7px]" />Time<Pin size={18} className="ml-auto fill-[#111] text-[#111]" /><X size={13} className="mr-[4px] mb-[10px] ml-[4px] text-[#999]" /></div>
          </div>
          <div className="ml-[10px] mr-[11px] mt-[16px] border-b border-[#999] pb-[5px] text-[15px] leading-[20px] font-bold text-[#444]">My portfolio</div>
          <div className="ml-[10px]">
            <LinkRow t="My portfolio view" h="h-[19px]" /><LinkRow t="Create Bill" h="h-[21px]" /><LinkRow t="Open Bill" h="h-[20px]" /><LinkRow t="Create Adjustment Note" h="h-[21px]" /><LinkRow t="Approve Bill" muted h="h-[21px]" /><LinkRow t="Debtor Management" h="h-[20px]" />
          </div>
          <div className="mt-[105px] ml-[5px] flex h-[25px] w-[1832px] items-center justify-between bg-[#612220] pl-[5px] text-[14px] font-bold text-white">My unprocessed bills:<RefreshCw size={16} className="mr-[13px]" strokeWidth={3} /></div>
          <div className="mt-[2px] ml-[5px] flex h-[22px] w-[1832px] border-b-[3px] border-[#bdbaa8] bg-[#e7e5d6] pl-[6px] text-[#444]">
            <div className="flex w-[226px] items-center">Debtor Name</div><div className="flex w-[227px] items-center">Bill No.</div><div className="flex items-center">Bill Entity Code</div>
          </div>
          <div className="ml-[5px] flex w-[1832px]">
            <div className="flex-1">
              {bills.map((b) => (
                <div key={b[1]} className="flex h-[25px] items-center border-b-2 border-[#e4e1d3] bg-[#fbfbfb] pl-[5px] text-[#444]">
                  <span className="w-[227px] whitespace-nowrap">{b[0]}</span><span className="w-[227px]">{b[1]}</span><span>PH010</span><span className="mr-[4px] ml-auto">{b[2]}</span>
                </div>
              ))}
            </div>
            <div className="flex w-[16px] flex-col items-center justify-between bg-[#f0f0f0] py-[16px] text-[#555]"><ChevronUp size={16} strokeWidth={3} /><ChevronDown size={16} strokeWidth={3} /></div>
          </div>
          <div className="ml-[10px] mr-[11px] mt-[30px] flex items-center gap-[3px] border-b border-[#999] pb-[1px] text-[15px] leading-[17px] font-bold text-[#444]"><span className="flex h-[14px] w-[10px] items-center justify-center rounded-full bg-[#444] text-[10px] text-white">i</span>Help</div>
          <div className="ml-[10px]"><LinkRow t="Knowledge Base" h="h-[19px]" /><LinkRow t="About Portfolio" h="h-[19px]" /></div>
        </div>
      </div>
      <Popup />
      <div className="flex h-[40px] shrink-0 items-stretch bg-[#655425] text-white">
        <div className="flex w-[44px] items-center justify-center"><svg width="18" height="22" viewBox="0 0 22 22" fill="#fff"><path d="M1 4l8-1.3V10H1zM10 2.5L21 1v9H10zM1 11h8v7.5L1 17.2zM10 11h11v10l-11-1.5z" /></svg></div>
        <div className="flex w-[54px] items-center justify-center"><svg width="14" height="24" viewBox="0 0 20 24" fill="none" stroke="#fff" strokeWidth="1.4"><circle cx="12" cy="8" r="6" /><path d="M8 13L3 22" /></svg></div>
        {barIcons.map((k, i) => {
          const run = k !== "glass" && k !== "whatsapp" && !(k === "ui" && i === 2);
          return (
            <div key={i} className={`relative flex w-[49px] items-center justify-center ${k === "ie" ? "bg-[#8f7426]" : k === "hangouts" ? "bg-[#c9720f]" : ""}`}>
              <AppIcon kind={k} />
              {run && <span className={`absolute bottom-0 left-[3px] right-[3px] h-[2px] ${k === "hangouts" ? "bg-[#f57c00]" : "bg-[#f6e3a1]"}`} />}
            </div>
          );
        })}
        <div className="ml-auto flex flex-col items-end justify-center pr-[2px] text-[13px] leading-[16px]"><span>1:28 PM</span><span>5/14/2019</span></div>
      </div>
    </div>
  );
}

export default function App() {
  return (
    <div className="flex h-[1080px] w-[3840px] overflow-hidden">
      <LeftTaskbar />
      <Excel />
      <Browser />
    </div>
  );
}
